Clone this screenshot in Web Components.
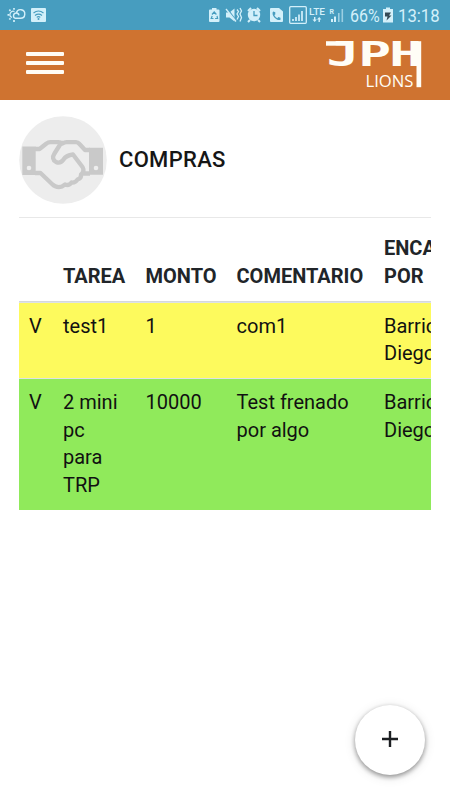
<!DOCTYPE html>
<html lang="es">
<head>
<meta charset="utf-8">
<meta name="viewport" content="width=device-width, initial-scale=1">
<title>JPH Lions - Compras</title>
<style>
  body {
    margin: 0;
    height: 800px;
    overflow: hidden;
    background: #fff;
    color: #212529;
    font-family: Roboto, sans-serif;
  }
</style>
</head>
<body>
<status-bar battery="66%" time="13:18"></status-bar>
<app-header></app-header>
<main>
  <section-title>COMPRAS</section-title>
  <task-table>
    <task-row head>
      <span></span><span>TAREA</span><span>MONTO</span><span>COMENTARIO</span><span>ENCARGADO POR</span>
    </task-row>
    <task-row state="pending">
      <span>V</span><span>test1</span><span>1</span><span>com1</span><span>Barrios Diego</span>
    </task-row>
    <task-row state="done">
      <span>V</span><span>2 mini pc para TRP</span><span>10000</span><span>Test frenado por algo</span><span>Barrios Diego</span>
    </task-row>
  </task-table>
</main>
<add-button></add-button>

<script>
class StatusBar extends HTMLElement {
  constructor() {
    super();
    this.attachShadow({ mode: "open" });
    this.shadowRoot.innerHTML = `
      <style>
        :host {
          display: block;
          height: 30px;
          background: #479dbf;
          color: #d3f0fa;
        }
        .bar {
          display: flex;
          align-items: center;
          height: 30px;
        }
        svg { display: block; flex: none; }
        .left { margin-right: 161px; }
        span {
          font-size: 18px;
          line-height: 31px;
          white-space: nowrap;
          transform-origin: left center;
        }
        #battery { width: 31px; margin-left: 5px; transform: scaleX(.89); }
        #time { width: 42px; margin-left: 4px; transform: scaleX(.93); }
      </style>
      <div class="bar">
        <svg class="left" width="47" height="30" viewBox="0 0 47 30" fill="none" stroke="currentColor">
          <path d="M15.500 18.300h5a4.300 4.300 0 1 0-4.200-5.300a2.700 2.700 0 0 0-.8 5.300zM16.300 13q2.200 0 2.700 2.300" stroke-width="1.400"/>
          <path d="M12 17.500a3.200 3.200 0 0 1 2.500-6" stroke-width="1.200"/>
          <path d="M14 8v1.700M9.300 9.700l1.200 1.200M7.500 14.800h1.800M9.300 19.500l1.200-1.200M14 20v2" stroke-width="1.700"/>
          <rect x="31" y="8" width="15" height="14" rx="1" fill="currentColor" stroke="none"/>
          <path d="M33.500 13q5-4 10 0M35 15.400q3.500-2.700 7 0M36.700 17.400q1.800-1.400 3.600 0" stroke="#479dbf" stroke-width="1.200"/>
          <circle cx="38.500" cy="19" r="1" fill="#479dbf" stroke="none"/>
        </svg>
        <svg width="137" height="30" viewBox="208 0 137 30" fill="currentColor">
          <path d="M210 9.500h2V8h4.500v1.500h2q1 0 1 1v10.500q0 1-1 1H210q-1 0-1-1V10.500q0-1 1-1z"/>
          <path d="M212 14.500l2.200-2.500 2.200 2.500M217 16l.6 2.500h-2.500M213.500 18.500h-2.300l1-2.500" fill="none" stroke="#479dbf" stroke-width="1.200"/>
          <path d="M226 12.500h3.500l5-4v13l-5-4H226z"/>
          <path d="M227 8.500l9.500 13" stroke="#479dbf" stroke-width="1.600"/>
          <path d="M226 9l10 12.500" fill="none" stroke="currentColor" stroke-width="1.300"/>
          <path d="M237 9.500l1.500 2-1.500 2.500 1.500 2.500-1.500 3M240 8l1.500 3-1.500 3 1.500 3.500-1.500 4" fill="none" stroke="currentColor" stroke-width="1.300"/>
          <circle cx="254" cy="15" r="6.200"/>
          <path d="M248 11l3-3M257 8l3 3M250 20l-2 2M258 20l2 2" stroke="currentColor" stroke-width="2"/>
          <path d="M254 11v4.500h3.500" fill="none" stroke="#479dbf" stroke-width="1.300"/>
          <path d="M271 8h8l4 3.500V21q0 1-1 1h-11q-1 0-1-1V9q0-1 1-1z"/>
          <path d="M273.300 11.500l2 .8v2.200l-1 .6q1 2.400 3 3.200l1-1.200 2.200.6v2q-1.500 1-4-.5-4.500-3-3.900-6.800z" fill="#479dbf"/>
          <rect x="289.700" y="6.700" width="16.600" height="16.600" rx="1" fill="none" stroke="currentColor" stroke-width="1.300"/>
          <path d="M292 19h2v2h-2zM295 17h2v4h-2zM298 14.500h2v6.500h-2zM301 11h2v10h-2z" opacity=".85"/>
          <text x="309" y="15" font-size="9" font-weight="500" textLength="16" lengthAdjust="spacingAndGlyphs">LTE</text>
          <path d="M314 17v2.500h-1.500l2.200 2.500 2.200-2.500h-1.500V17zM318.500 22v-2.500H317l2.200-2.500 2.200 2.500h-1.500V22z"/>
          <text x="329.500" y="13.500" font-size="7" font-weight="700">R</text>
          <path d="M331 19h2v3h-2zM334 16.500h2V22h-2z"/>
          <path d="M338 13h1.600v9H338zM341.500 9h1.600v13h-1.600z" opacity=".6"/>
        </svg>
        <span id="battery"></span>
        <svg width="12" height="30" viewBox="0 0 12 30" style="margin-left: 1px">
          <path d="M1 9h3V7.500h4V9h3v13.500H1z" fill="currentColor"/>
          <path d="M3 12.500h6l-2 3h2.500l-5 5 1-4H3z" fill="#344a55"/>
        </svg>
        <span id="time"></span>
      </div>
    `;
  }
  connectedCallback() {
    this.shadowRoot.querySelector("#battery").textContent = this.getAttribute("battery");
    this.shadowRoot.querySelector("#time").textContent = this.getAttribute("time");
  }
}

class BrandLogo extends HTMLElement {
  constructor() {
    super();
    this.attachShadow({ mode: "open" });
    this.shadowRoot.innerHTML = `
      <style>
        :host { display: block; color: #fffdf6; }
        svg { display: block; }
        .name { font: bold 34px "DejaVu Sans Mono", monospace; }
        .sub { font: 16.5px "Open Sans", sans-serif; }
      </style>
      <svg width="100" height="50" viewBox="0 0 100 50" fill="currentColor">
        <text class="name" transform="translate(-1 26) scale(1.61 1)" x="1.500 21.300 40.500" y="0">JPH</text>
        <rect x="1" y="1.200" width="26" height="4.500"/>
        <rect x="91.500" y="1.200" width="4.700" height="46"/>
        <text class="sub" x="40.500" y="47" textLength="48" lengthAdjust="spacingAndGlyphs">LIONS</text>
      </svg>
    `;
  }
}

class AppHeader extends HTMLElement {
  constructor() {
    super();
    this.attachShadow({ mode: "open" });
    this.shadowRoot.innerHTML = `
      <style>
        :host {
          display: flex;
          justify-content: space-between;
          align-items: flex-start;
          box-sizing: border-box;
          height: 70px;
          padding: 10px 25px 0 26px;
          background: #cf7330;
        }
        .menu {
          display: flex;
          flex-direction: column;
          gap: 5px;
          padding: 12px 0 0;
          border: 0;
          background: none;
        }
        .menu i {
          width: 38px;
          height: 4px;
          border-radius: 1px;
          background: #fffdf6;
        }
      </style>
      <button class="menu" aria-label="Menu"><i></i><i></i><i></i></button>
      <brand-logo></brand-logo>
    `;
  }
}

class SectionTitle extends HTMLElement {
  constructor() {
    super();
    this.attachShadow({ mode: "open" });
    this.shadowRoot.innerHTML = `
      <style>
        :host {
          display: flex;
          align-items: center;
          gap: 12px;
          height: 88px;
          margin: 16px 19px 0;
          padding-bottom: 13px;
          border-bottom: 1px solid #e8e8e8;
        }
        svg { display: block; }
        h1 {
          margin: 0;
          color: #161616;
          font-size: 22px;
          font-weight: 500;
          letter-spacing: .3px;
          line-height: 28px;
        }
      </style>
      <svg width="88" height="88" viewBox="0 0 88 88">
        <circle cx="44" cy="44" r="43.800" fill="#ededed"/>
        <path d="M3.300 30.500h13.400v28.500H3.300zM70 31.700h14v27H70z" fill="#c9c9c9"/>
        <g fill="none" stroke="#c9c9c9" stroke-width="4.300" stroke-linejoin="round">
          <path d="M16 33h4.500l7-5.500q1.500-1.300 4-1.300h8q2 0 4 1.300 2-1.300 4-1.300H57q2 0 3.500 1.800l5.500 6H71"/>
          <path d="M16 57h5.500l11.500 11q4.500 4.500 10 2.500l3-2q4 1.500 6.500-2 4 .5 6-3 4-1 3.500-5 4-3 1.500-7.500L54 38.500q-7 1-9.500 5-3 4.500-7.500 2.500-5-3-1.500-8.500l5-8q1-2 4-3M63 57.500h8"/>
        </g>
        <circle cx="10" cy="52" r="2.300" fill="#ededed"/>
        <circle cx="77" cy="52" r="2.300" fill="#ededed"/>
      </svg>
      <h1><slot></slot></h1>
    `;
  }
}

class TaskTable extends HTMLElement {
  constructor() {
    super();
    this.attachShadow({ mode: "open" });
    this.shadowRoot.innerHTML = `
      <style>
        :host {
          display: block;
          margin: 6px 19px 0;
          overflow: hidden;
        }
      </style>
      <slot></slot>
    `;
  }
}

class TaskRow extends HTMLElement {
  constructor() {
    super();
    this.attachShadow({ mode: "open" });
    this.shadowRoot.innerHTML = `
      <style>
        :host {
          display: grid;
          grid-template-columns: 34px 82.500px 91px 147.500px 130px;
          box-sizing: border-box;
          width: 485px;
          border-top: 1px solid #dee2e6;
          color: #111;
          font-size: 20px;
          line-height: 27.500px;
        }
        :host([head]) {
          align-items: end;
          color: #212529;
          border-bottom: 1px solid #d5d8dc;
          border-top-color: transparent;
          font-weight: 700;
        }
        :host([state="pending"]) { background: #fdfa5d; }
        :host([state="done"]) { background: #90ea5b; }
        ::slotted(span) {
          padding: 10.250px 10px;
        }
      </style>
      <slot></slot>
    `;
  }
}

class AddButton extends HTMLElement {
  constructor() {
    super();
    this.attachShadow({ mode: "open" });
    this.shadowRoot.innerHTML = `
      <style>
        :host {
          position: fixed;
          right: 25px;
          bottom: 25px;
        }
        button {
          display: grid;
          place-items: center;
          width: 70px;
          height: 70px;
          padding: 0 0 3px;
          border: 0;
          border-radius: 50%;
          background: #fff;
          box-shadow: 0 2px 5px rgba(0, 0, 0, .4), 0 2px 12px rgba(0, 0, 0, .12);
        }
      </style>
      <button aria-label="Agregar">
        <svg width="16" height="16" viewBox="0 0 16 16">
          <path d="M8 0v16M0 8h16" stroke="#1c1f22" stroke-width="2.400"/>
        </svg>
      </button>
    `;
  }
}

customElements.define("status-bar", StatusBar);
customElements.define("brand-logo", BrandLogo);
customElements.define("app-header", AppHeader);
customElements.define("section-title", SectionTitle);
customElements.define("task-table", TaskTable);
customElements.define("task-row", TaskRow);
customElements.define("add-button", AddButton);
</script>
</body>
</html>
